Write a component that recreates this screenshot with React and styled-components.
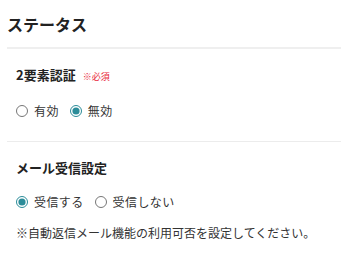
import React, { useState } from "react";
import styled, { createGlobalStyle } from "styled-components";

const GlobalStyle = createGlobalStyle`
  body {
    margin: 0;
    background: #fff;
    font-family: "Noto Sans CJK JP", "Noto Sans", sans-serif;
    color: #333;
  }
`;

const Panel = styled.section`
  padding: 12px 0 0 7px;
`;

const Title = styled.h2`
  margin: 0;
  padding-bottom: 11px;
  font-size: 16px;
  font-weight: bold;
  line-height: 24px;
  color: #222;
  border-bottom: 2px solid #efefef;
`;

const Group = styled.div`
  padding: 16px 0 ${(p) => (p.$last ? "14px" : "21px")} 9px;
  border-bottom: ${(p) => (p.$last ? "none" : "1px solid #ececec")};
`;

const Label = styled.div`
  display: flex;
  align-items: baseline;
  gap: 7px;
  font-size: 13px;
  font-weight: bold;
  line-height: 20px;
  color: #222;
`;

const Required = styled.span`
  font-size: 9px;
  font-weight: normal;
  color: #e8283c;
`;

const Options = styled.div`
  display: flex;
  align-items: center;
  gap: 11px;
  margin-top: 15px;
`;

const Option = styled.label`
  display: flex;
  align-items: center;
  gap: 6px;
  font-size: 12px;
  letter-spacing: 0.4px;
  line-height: 18px;
  color: #333;
  cursor: pointer;

  input {
    margin: 0;
    width: 12px;
    height: 12px;
    accent-color: #2b8c99;
  }
`;

const Note = styled.p`
  margin: 13px 0 0;
  font-size: 12px;
  line-height: 18px;
  color: #333;
`;

const RadioGroup = ({ name, options, value, onChange }) => (
  <Options>
    {options.map((opt) => (
      <Option key={opt}>
        <input
          type="radio"
          name={name}
          checked={value === opt}
          onChange={() => onChange(opt)}
        />
        {opt}
      </Option>
    ))}
  </Options>
);

const App = () => {
  const [twoFactor, setTwoFactor] = useState("無効");
  const [mail, setMail] = useState("受信する");

  return (
    <>
      <GlobalStyle />
      <Panel>
        <Title>ステータス</Title>
        <Group>
          <Label>
            2要素認証<Required>※必須</Required>
          </Label>
          <RadioGroup
            name="twoFactor"
            options={["有効", "無効"]}
            value={twoFactor}
            onChange={setTwoFactor}
          />
        </Group>
        <Group $last>
          <Label>メール受信設定</Label>
          <RadioGroup
            name="mail"
            options={["受信する", "受信しない"]}
            value={mail}
            onChange={setMail}
          />
          <Note>※自動返信メール機能の利用可否を設定してください。</Note>
        </Group>
      </Panel>
    </>
  );
};

export default App;
